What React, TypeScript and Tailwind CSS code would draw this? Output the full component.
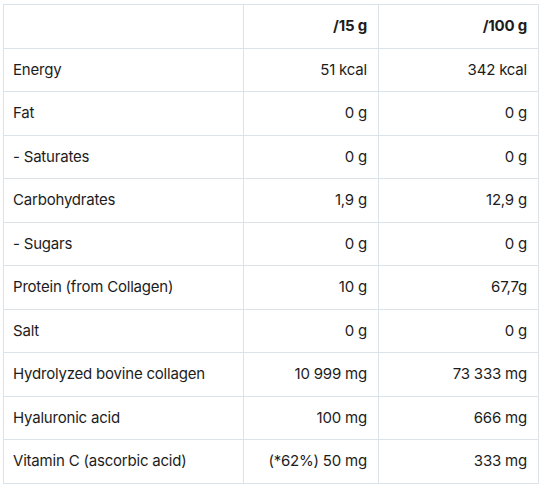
const rows: [string, string, string][] = [
  ['Energy', '51 kcal', '342 kcal'],
  ['Fat', '0 g', '0 g'],
  ['- Saturates', '0 g', '0 g'],
  ['Carbohydrates', '1,9 g', '12,9 g'],
  ['- Sugars', '0 g', '0 g'],
  ['Protein (from Collagen)', '10 g', '67,7g'],
  ['Salt', '0 g', '0 g'],
  ['Hydrolyzed bovine collagen', '10 999 mg', '73 333 mg'],
  ['Hyaluronic acid', '100 mg', '666 mg'],
  ['Vitamin C (ascorbic acid)', '(*62%) 50 mg', '333 mg'],
]

function App() {
  return (
    <div className="bg-white pl-[3px] pt-[4px] font-['Inter',sans-serif] text-[15px] tracking-[-0.2px] text-[#1c1c1c]">
      <table className="w-[535px] border-collapse table-fixed">
        <colgroup>
          <col className="w-[240px]" />
          <col className="w-[135px]" />
          <col className="w-[160px]" />
        </colgroup>
        <thead>
          <tr className="h-[43.5px]">
            <th className="border border-[#dbe2e8] px-[10px]"></th>
            <th className="border border-[#dbe2e8] px-[11px] text-right font-bold">/15 g</th>
            <th className="border border-[#dbe2e8] px-[11px] text-right font-bold">/100 g</th>
          </tr>
        </thead>
        <tbody>
          {rows.map(([name, a, b]) => (
            <tr key={name} className="h-[43.5px]">
              <td className="border border-[#dbe2e8] px-[9px] text-left">{name}</td>
              <td className="border border-[#dbe2e8] px-[11px] text-right">{a}</td>
              <td className="border border-[#dbe2e8] px-[11px] text-right">{b}</td>
            </tr>
          ))}
        </tbody>
      </table>
    </div>
  )
}

export default App
